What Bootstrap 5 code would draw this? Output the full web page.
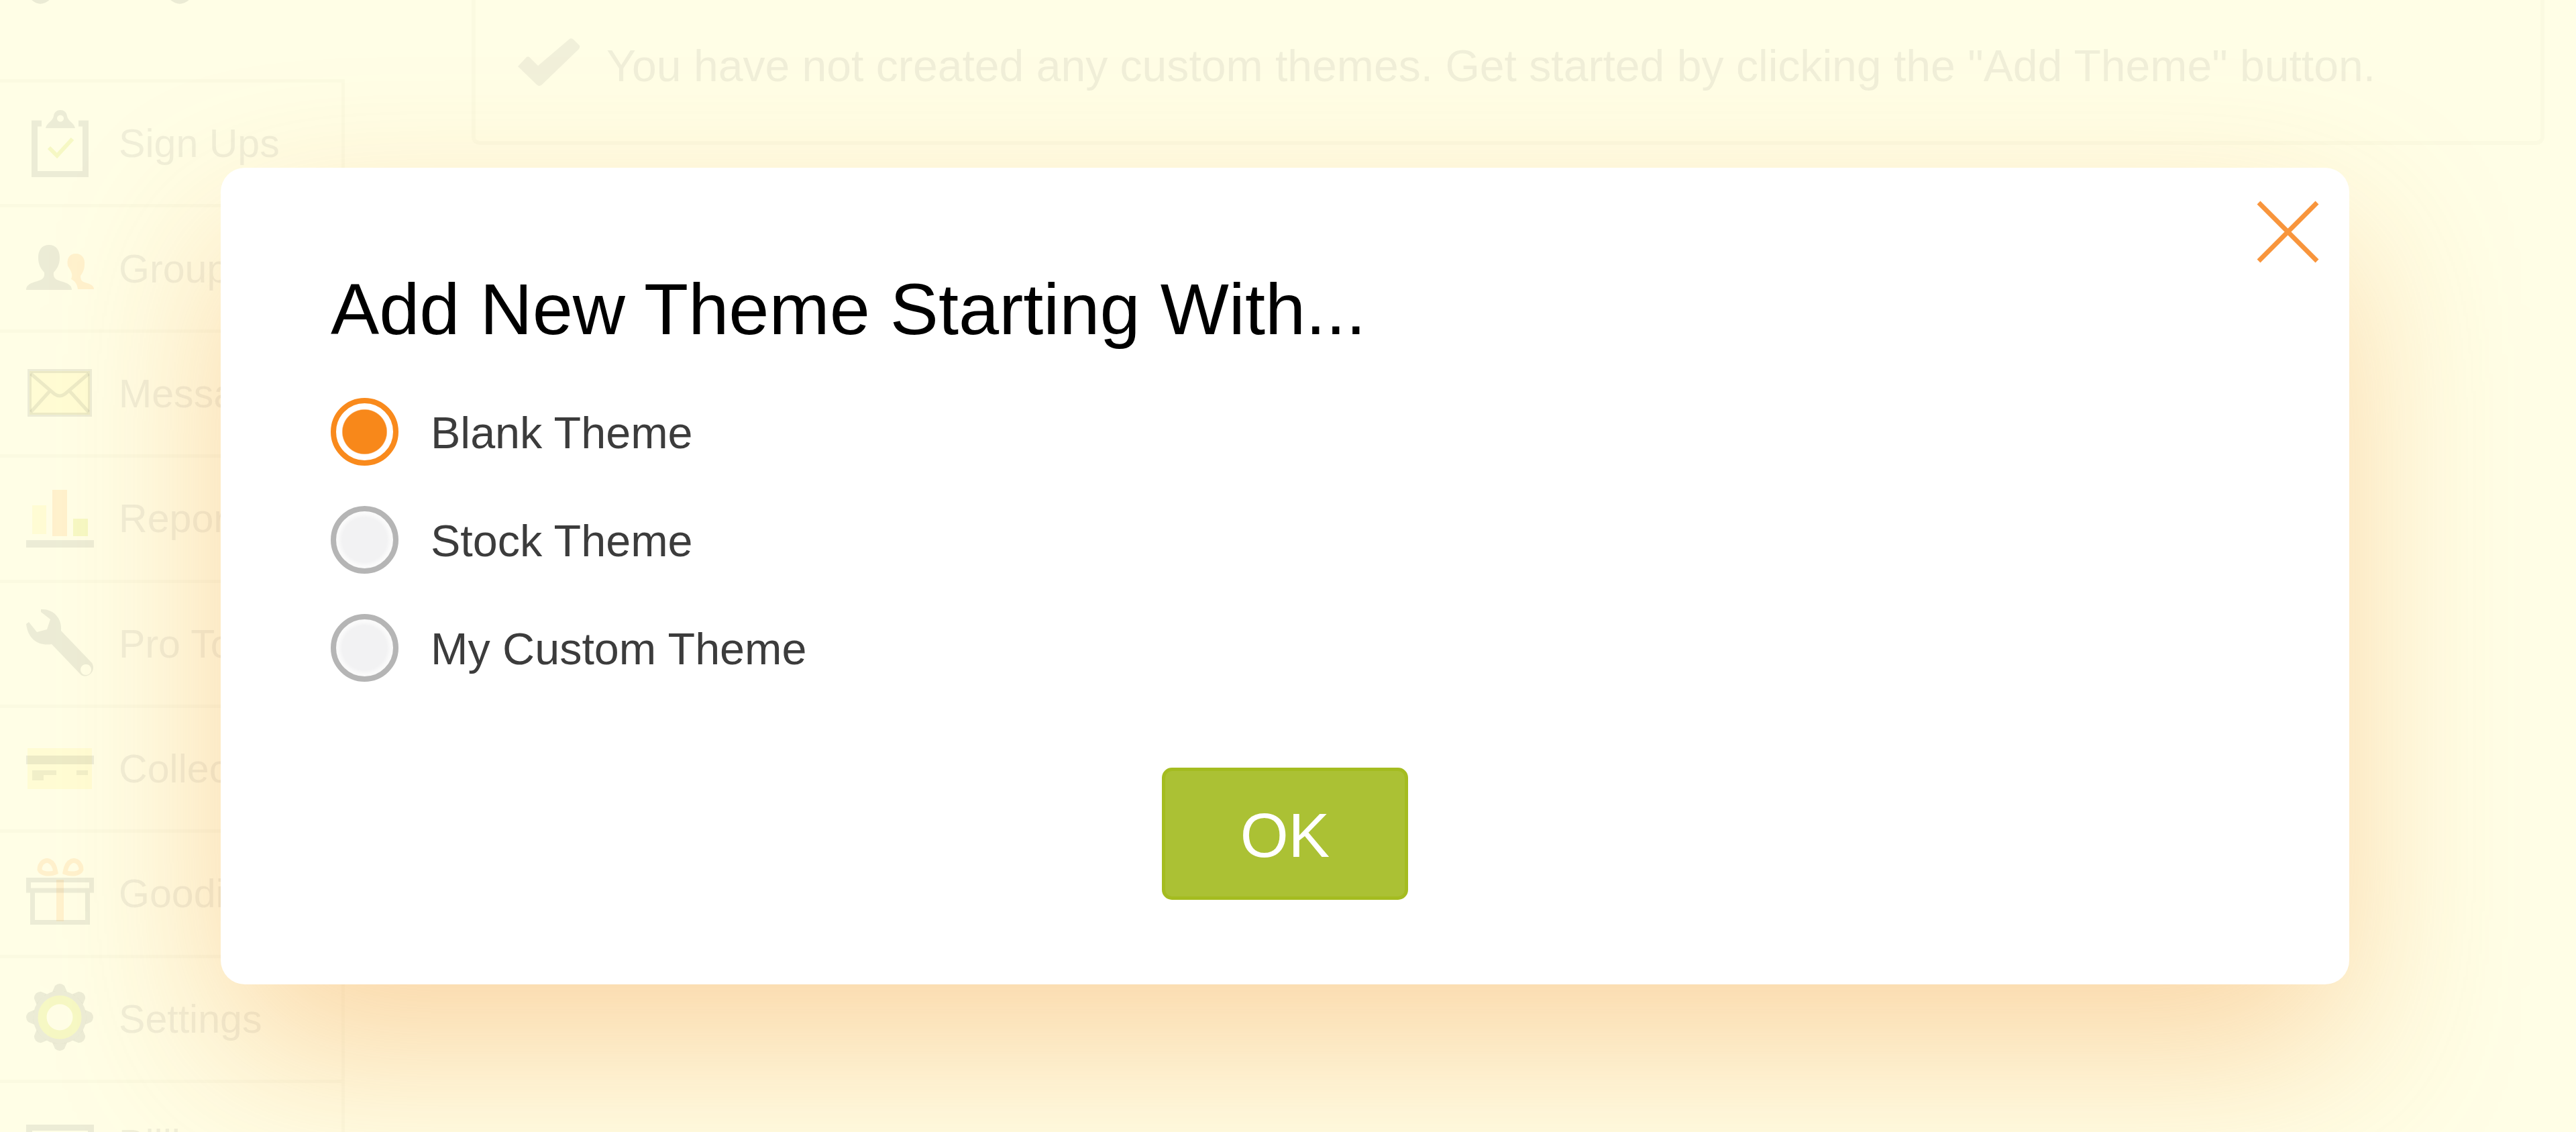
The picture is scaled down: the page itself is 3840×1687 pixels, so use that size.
<!DOCTYPE html>
<html lang="en">
<head>
<meta charset="utf-8">
<meta name="viewport" content="width=device-width, initial-scale=1">
<title>Add New Theme</title>
<link href="https://cdn.jsdelivr.net/npm/bootstrap@5.3.0/dist/css/bootstrap.min.css" rel="stylesheet">
<style>
  :root { --ink: rgba(100, 106, 96, .12); --rule: rgba(110, 110, 90, .028); --sun: rgba(255, 240, 120, .16); --tang: rgba(255, 160, 60, .14); --leaf: rgba(210, 225, 60, .2); }
  html, body { height: 100%; overflow: hidden; }
  body { background: #fffee6; font-family: "Liberation Sans", Arial, sans-serif; }
  .page { height: 1687px; overflow: hidden; }
  .sidebar { width: 514px; }
  .side-head { height: 118px; }
  .side-menu { border-top: 5px solid var(--rule); border-right: 5px solid var(--rule); }
  .side-item { height: 186.4px; padding-left: 39px; border-bottom: 5px solid var(--rule); font-size: 59.1px; line-height: 1; color: rgba(92, 98, 92, .095); white-space: nowrap; }
  .side-item svg { width: 101px; height: 120px; margin-right: 37px; flex: none; overflow: visible; }
  .content { padding: 0 47px 0 189px; }
  .notice { height: 216px; border: 6px solid var(--rule); border-top: 0; border-radius: 0 0 12px 12px; padding: 0 0 18px 62px; font-size: 66.1px; line-height: 1; color: rgba(92, 98, 92, .095); white-space: nowrap; }
  .notice span { padding-top: 5px; }
  .notice svg { width: 94px; height: 73px; margin: 0 39px 8px 0; flex: none; }
  .theme-modal { --bs-modal-width: 3173px; }
  .theme-modal .modal-dialog { margin: 250px 0 0 329px; max-width: 3173px; }
  .theme-modal .modal-content { height: 1217px; border: 0; border-radius: 36px; background: #fff; padding: 151px 164px 0; box-shadow: 0 105px 300px -12px rgba(241, 140, 50, .37); }
  .dlg-title { font-size: 108.2px; line-height: 120px; font-weight: 400; color: #000; margin: 0 0 42px; white-space: nowrap; }
  .option { height: 161px; gap: 48px; font-size: 66.5px; line-height: 1; color: #3c3c3c; }
  .option span { padding-top: 4px; }
  .option input { appearance: none; width: 101px; height: 101px; margin: 0; border-radius: 50%; border: 8px solid #b5b5b5; background: radial-gradient(circle, #f2f2f3 33px, #fafafa 39px); }
  .option input:checked { border-color: #f98a1c; background: radial-gradient(circle, #f8881a 32.5px, #fff 34px); }
  .btn-ok { width: 367px; height: 197px; margin-top: 98px; padding: 6px 0 0; border: 5px solid #a4bc20; border-radius: 15px; background: #abc134; color: #fff; font-size: 92.5px; line-height: 1; }
  .btn-ok:hover { background: #a2bb18; color: #fff; border-color: #a2bb18; }
  .dlg-close { position: absolute; top: 48px; right: 44px; width: 95px; height: 95px; padding: 0; border: 0; background: none; line-height: 0; }
</style>
</head>
<body>
<div class="page d-flex">
  <aside class="sidebar flex-shrink-0">
    <div class="side-head">
      <svg class="d-block" width="400" height="12" fill="none" stroke="rgba(92,98,92,.12)" stroke-width="7"><path d="M48-4Q60 8 73-4M255-4Q268 8 281-4"/></svg>
    </div>
    <nav class="side-menu d-flex flex-column">
      <div class="side-item d-flex align-items-center flex-shrink-0">
        <svg viewBox="0 0 101 120" fill="none" stroke="var(--ink)" stroke-width="9"><path d="M23 30H12.500V105.500H88.500V30H78"/><path d="M29 37C31 28 39 28 41 19C42 7 60 7 61 19C63 28 71 28 73 37ZM51 17.500a5 5 0 1 0 .1 0Z" fill="var(--ink)" fill-rule="evenodd" stroke="none"/><path d="M34 66L46 78L69 53" stroke="var(--leaf)" stroke-width="6"/></svg>Sign Ups
      </div>
      <div class="side-item d-flex align-items-center flex-shrink-0">
        <svg viewBox="0 0 101 120"><path fill="var(--ink)" d="M34 25C45 25 50 33 50 44C50 54 46 61 41 66C40 75 44 77 55 80C64 83 68 86 68 92H0C0 86 4 83 13 80C24 77 28 75 27 66C22 61 18 54 18 44C18 33 23 25 34 25Z"/><path fill="var(--tang)" d="M74 38C83 38 88 45 87 54C87 62 84 67 81 71C81 79 84 80 91 82C98 84 101 87 101 91H77C76 83 73 79 67 76C71 68 65 62 62 56C60 46 64 38 74 38Z"/></svg>Groups
      </div>
      <div class="side-item d-flex align-items-center flex-shrink-0">
        <svg viewBox="0 0 101 120" fill="none" stroke="var(--ink)"><path d="M5 27H95V92H5Z" fill="var(--sun)" stroke-width="6"/><path d="M7 31L42 61Q50 67 58 61L93 31M7 88L35 57M93 88L65 57" stroke-width="5"/></svg>Messages
      </div>
      <div class="side-item d-flex align-items-center flex-shrink-0">
        <svg viewBox="0 0 101 120"><path fill="var(--sun)" d="M9 40H30V83H9Z"/><path fill="var(--tang)" d="M39 17H61V86H39Z"/><path fill="var(--leaf)" d="M70 60H92V86H70Z"/><path fill="var(--ink)" d="M0 92H101V103H0Z"/></svg>Reports
      </div>
      <div class="side-item d-flex align-items-center flex-shrink-0">
        <svg viewBox="0 0 101 120"><path fill="var(--ink)" fill-rule="evenodd" d="M22 9C40 8 54 22 52 41L98 89C105 100 93 113 82 107L38 61C20 64 3 55 0 31L4 28L16 43L31 39L36 24L22 13ZM89 91a8 8 0 1 0 .1 0Z"/></svg>Pro Tools
      </div>
      <div class="side-item d-flex align-items-center flex-shrink-0">
        <svg viewBox="0 0 101 120"><path fill="var(--sun)" d="M2 29H98V90H2Z"/><path fill="var(--ink)" d="M0 40H101V53H0Z"/><path fill="var(--ink)" opacity=".75" d="M9 62H45V69H26V77H9ZM75 62H92V69H75Z"/></svg>Collections
      </div>
      <div class="side-item d-flex align-items-center flex-shrink-0">
        <svg viewBox="0 0 101 120" fill="none" stroke="var(--ink)" stroke-width="7"><path d="M3.500 39.500H97.500V55H3.500ZM9.500 58.500V102.500H91.500V58.500"/><path d="M45 39H56V101H45Z" fill="var(--tang)" stroke="none"/><path d="M44 28C34 32 22 30 20 24C20 15 27 9 34 11C41 14 43 21 44 28ZM58 28C68 32 80 30 82 24C82 15 75 9 68 11C61 14 59 21 58 28Z" stroke="var(--tang)" stroke-width="7"/></svg>Goodies
      </div>
      <div class="side-item d-flex align-items-center flex-shrink-0">
        <svg viewBox="0 0 101 120"><circle cx="50" cy="58" r="36" fill="none" stroke="var(--ink)" stroke-width="7"/><g fill="var(--ink)"><path id="tooth" d="M39 20.200L43 11Q50 5 57 11L61 20.200Q50 17 39 20.200Z"/><use href="#tooth" transform="rotate(45 50 58)"/><use href="#tooth" transform="rotate(90 50 58)"/><use href="#tooth" transform="rotate(135 50 58)"/><use href="#tooth" transform="rotate(180 50 58)"/><use href="#tooth" transform="rotate(225 50 58)"/><use href="#tooth" transform="rotate(270 50 58)"/><use href="#tooth" transform="rotate(315 50 58)"/></g><circle cx="50" cy="58" r="26" fill="none" stroke="var(--leaf)" stroke-width="13"/></svg>Settings
      </div>
      <div class="side-item d-flex align-items-center flex-shrink-0">
        <svg viewBox="0 0 101 120" fill="none" stroke="var(--ink)" stroke-width="9"><path d="M4.500 35.500H96.500V90H4.500Z"/></svg>Billing
      </div>
    </nav>
  </aside>
  <main class="content flex-grow-1">
    <div class="notice d-flex align-items-center">
      <svg viewBox="0 0 94 73" fill="rgba(92,98,92,.085)"><path d="M1 43L14 29Q17 27 20 31L31 42L78 2Q81 0 84 3L93 12Q94 15 91 18L37 70Q33 74 29 70Z"/></svg>
      <span>You have not created any custom themes. Get started by clicking the "Add Theme" button.</span>
    </div>
  </main>
</div>

<div class="modal theme-modal d-block overflow-hidden" tabindex="-1" role="dialog" aria-labelledby="dlgTitle">
  <div class="modal-dialog">
    <form class="modal-content">
      <button type="button" class="dlg-close" aria-label="Close"><svg width="95" height="95" stroke="#f8953c" stroke-width="7"><path d="M4 4L91 91M91 4L4 91"/></svg></button>
      <h1 class="dlg-title" id="dlgTitle">Add New Theme Starting With...</h1>
      <label class="option d-flex align-items-center"><input type="radio" name="theme" checked><span>Blank Theme</span></label>
      <label class="option d-flex align-items-center"><input type="radio" name="theme"><span>Stock Theme</span></label>
      <label class="option d-flex align-items-center"><input type="radio" name="theme"><span>My Custom Theme</span></label>
      <button type="button" class="btn btn-ok align-self-center">OK</button>
    </form>
  </div>
</div>
<script src="https://cdn.jsdelivr.net/npm/bootstrap@5.3.0/dist/js/bootstrap.bundle.min.js"></script>
</body>
</html>
